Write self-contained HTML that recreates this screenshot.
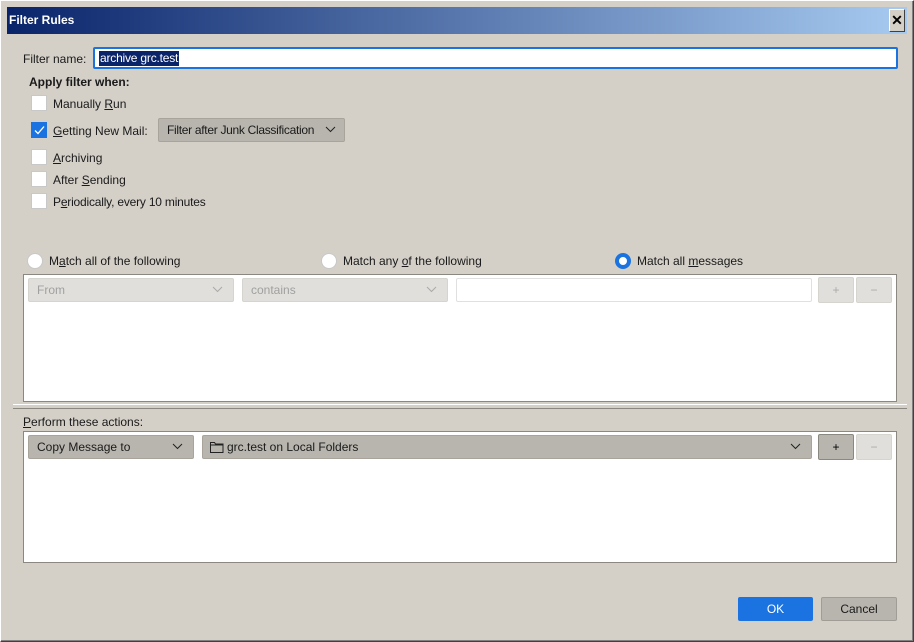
<!DOCTYPE html>
<html><head><style>
*{box-sizing:border-box;margin:0;padding:0}
body{width:914px;height:642px;background:#d4d0c8;font-family:"Liberation Sans",sans-serif;font-size:12px;color:#1a1a1a;position:relative;overflow:hidden}
.a{position:absolute}
.frame{left:0;top:0;width:914px;height:642px;border:1px solid #fff;border-right-color:#404040;border-bottom-color:#404040;box-shadow:inset -1px -1px 0 #808080}
.title{left:7px;top:7px;width:900px;height:27px;background:linear-gradient(to right,#0a246a,#a6caf0);color:#fff;font-weight:bold;font-size:12px;line-height:27px;padding-left:2px}
.close{left:889px;top:9px;width:16px;height:23px;background:#d4d0c8;border:1px solid #fff;border-right-color:#404040;border-bottom-color:#404040;font-weight:bold;color:#000;text-align:center;line-height:20px;font-size:14px}
.cb{width:16px;height:16px;background:#fff;border:1px solid #c8c8c8}
.cb.on{background:#1a73e0;border-color:#1a73e0}
.lbl{line-height:18px}
.dd{border:1px solid #a8a49c;border-radius:2px;background:#b8b5ae;line-height:23px;padding-left:8px}
.dd.dis{background:#e0dfdb;border-color:#d6d4cf;color:#a0a0a0}
.chev{position:absolute;right:10px;top:5px}
.rad{width:16px;height:16px;border-radius:50%;background:#fff;border:1px solid #c8c8c8}
.box{background:#fff;border:1px solid #8a8880}
.btn{border:1px solid #b5b2ab;border-radius:2px;text-align:center;line-height:24px}
u{text-decoration:underline}
</style></head><body>
<div class="a frame"></div>
<div class="a title">Filter Rules</div>
<div class="a close">✕</div>

<div class="a lbl" style="left:23px;top:50px">Filter name:</div>
<div class="a" style="left:93px;top:47px;width:805px;height:22px;background:#fff;border:2px solid #1a73e0;border-radius:2px"></div>
<div class="a" style="left:99px;top:51px;background:#0a246a;color:#fff;line-height:15px;padding:0 1px;letter-spacing:-0.2px">archive grc.test</div>

<div class="a lbl" style="left:29px;top:73px;font-weight:bold">Apply filter when:</div>
<div class="a cb" style="left:31px;top:95px"></div><div class="a lbl" style="left:53px;top:95px">Manually <u>R</u>un</div>
<div class="a cb on" style="left:31px;top:122px"><svg width="14" height="14" viewBox="0 0 14 14"><path d="M3 7.5l3 3 6-7" stroke="#fff" stroke-width="1.3" fill="none"/></svg></div>
<div class="a lbl" style="left:53px;top:122px"><u>G</u>etting New Mail:</div>
<div class="a dd" style="left:158px;top:118px;width:187px;height:24px;letter-spacing:-0.3px">Filter after Junk Classification<svg class="chev" style="right:8px;top:7px" width="11" height="7"><path d="M1 1l4.5 4.5L10 1" stroke="#222" fill="none"/></svg></div>
<div class="a cb" style="left:31px;top:149px"></div><div class="a lbl" style="left:53px;top:149px"><u>A</u>rchiving</div>
<div class="a cb" style="left:31px;top:171px"></div><div class="a lbl" style="left:53px;top:171px">After <u>S</u>ending</div>
<div class="a cb" style="left:31px;top:193px"></div><div class="a lbl" style="left:53px;top:193px;letter-spacing:-0.2px">P<u>e</u>riodically, every 10 minutes</div>

<div class="a rad" style="left:27px;top:253px"></div><div class="a lbl" style="left:49px;top:252px">M<u>a</u>tch all of the following</div>
<div class="a rad" style="left:321px;top:253px"></div><div class="a lbl" style="left:343px;top:252px">Match any <u>o</u>f the following</div>
<div class="a rad" style="left:615px;top:253px;border:4px solid #1a73e0"></div><div class="a lbl" style="left:637px;top:252px">Match all <u>m</u>essages</div>

<div class="a box" style="left:23px;top:274px;width:874px;height:128px"></div>
<div class="a dd dis" style="left:28px;top:278px;width:206px;height:24px">From<svg class="chev" width="11" height="7" style="top:7px"><path d="M1 1l4.5 4.5L10 1" stroke="#aaa" fill="none"/></svg></div>
<div class="a dd dis" style="left:242px;top:278px;width:206px;height:24px">contains<svg class="chev" width="11" height="7" style="top:7px"><path d="M1 1l4.5 4.5L10 1" stroke="#aaa" fill="none"/></svg></div>
<div class="a" style="left:456px;top:278px;width:356px;height:24px;border:1px solid #e0e0e0;border-radius:2px;background:#fff"></div>
<div class="a btn" style="left:818px;top:277px;width:36px;height:26px;background:#e0dfdb;color:#aaa;border-color:#d6d4cf">+</div>
<div class="a btn" style="left:856px;top:277px;width:36px;height:26px;background:#e0dfdb;color:#aaa;border-color:#d6d4cf">−</div>

<div class="a" style="left:13px;top:404px;width:894px;height:1px;background:#fff"></div>
<div class="a" style="left:13px;top:408px;width:894px;height:1px;background:#8a8880"></div>

<div class="a lbl" style="left:23px;top:413px"><u>P</u>erform these actions:</div>
<div class="a box" style="left:23px;top:431px;width:874px;height:132px"></div>
<div class="a dd" style="left:28px;top:435px;width:166px;height:24px">Copy Message to<svg class="chev" width="11" height="7" style="top:7px"><path d="M1 1l4.5 4.5L10 1" stroke="#222" fill="none"/></svg></div>
<div class="a dd" style="left:202px;top:435px;width:610px;height:24px;padding-left:24px">grc.test on Local Folders<svg class="a" style="left:7px;top:6px" width="14" height="11"><path d="M0.5 0.5h4l1 1.5h7.5v8.5h-12.5z M0.5 3h12.5" stroke="#222" fill="none"/></svg><svg class="chev" width="11" height="7" style="top:7px"><path d="M1 1l4.5 4.5L10 1" stroke="#222" fill="none"/></svg></div>
<div class="a btn" style="left:818px;top:434px;width:36px;height:26px;background:#b8b5ae;border-color:#8a8880;color:#000">+</div>
<div class="a btn" style="left:856px;top:434px;width:36px;height:26px;background:#e0dfdb;color:#aaa;border-color:#d6d4cf">−</div>

<div class="a btn" style="left:738px;top:597px;width:75px;height:24px;background:#1a73e0;border-color:#1a73e0;color:#fff;line-height:23px">OK</div>
<div class="a btn" style="left:821px;top:597px;width:76px;height:24px;background:#b8b5ae;border-color:#a09d96;line-height:23px">Cancel</div>
</body></html>
